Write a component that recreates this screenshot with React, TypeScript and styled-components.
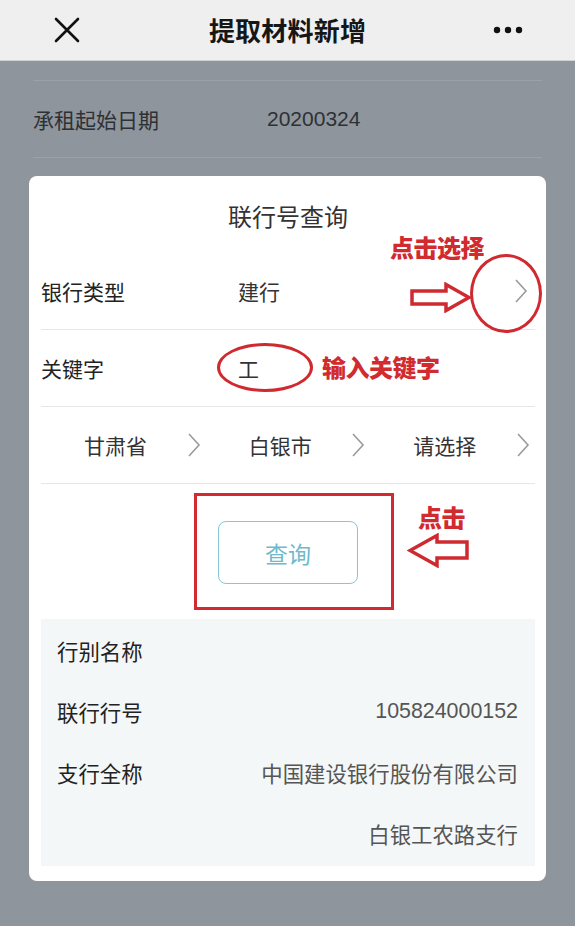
import styled, { createGlobalStyle } from 'styled-components';

const GlobalStyle = createGlobalStyle`
  html, body {
    margin: 0;
    padding: 0;
    background-color: #8f959c;
  }

  body {
    font-family: "Liberation Sans", "Noto Sans CJK SC", sans-serif;
  }

  * {
    box-sizing: border-box;
  }
`;

const Page = styled.div`
  width: 575px;
  height: 926px;
  overflow: hidden;
  background-color: #8f959c;
`;

const NavBar = styled.div`
  height: 61px;
  display: grid;
  grid-template-columns: 120px 1fr 120px;
  align-items: center;
  background-color: #efefef;
  border-bottom: 1px solid #d0d2d4;
`;

const NavButton = styled.div<{ $align: 'start' | 'end' }>`
  display: flex;
  justify-content: ${({ $align }) => ($align === 'start' ? 'flex-start' : 'flex-end')};
  padding: ${({ $align }) => ($align === 'start' ? '0 0 0 54px' : '0 52px 0 0')};
`;

const NavTitle = styled.div`
  text-align: center;
  font-size: 26px;
  font-weight: 700;
  color: #161616;
  letter-spacing: 0.2px;
  margin-top: -2px;
`;

const Backdrop = styled.div`
  padding: 19px 29px 0;
`;

const BehindRow = styled.div`
  margin: 0 4px;
  height: 78px;
  display: flex;
  align-items: center;
  border-top: 1px solid #9ca1a7;
  border-bottom: 1px solid #9ca1a7;
  font-size: 21px;
  color: #2d3135;
`;

const BehindLabel = styled.span`
  width: 234px;
`;

const Card = styled.div`
  position: relative;
  margin-top: 18px;
  height: 705px;
  background-color: #ffffff;
  border-radius: 8px;
  padding: 0 11px 0 12px;
  display: flex;
  flex-direction: column;
`;

const CardTitle = styled.div`
  height: 77px;
  display: flex;
  align-items: center;
  justify-content: center;
  font-size: 24px;
  color: #333;
  padding-top: 2px;
`;

const FormRow = styled.div`
  height: 77px;
  display: flex;
  align-items: center;
  border-bottom: 1px solid #e6e6e6;
  font-size: 21px;
  color: #222;
`;

const FormLabel = styled.span`
  width: 197px;
`;

const FormValue = styled.span`
  flex: 1;
  color: #333;
`;

const FormChevron = styled.span`
  display: flex;
  padding-right: 7px;
`;

const RegionCell = styled.div`
  flex: 1;
  display: flex;
  align-items: center;
  padding: 0 5px 0 43px;
  color: #333;
`;

const RegionName = styled.span`
  flex: 1;
`;

const ButtonArea = styled.div`
  height: 135px;
  display: flex;
  align-items: center;
  justify-content: center;
`;

const QueryButton = styled.button`
  width: 140px;
  height: 63px;
  border: 1.5px solid #86c7d3;
  border-radius: 8px;
  background: #fff;
  color: #70b9ca;
  font-size: 23px;
  font-family: "Noto Sans CJK SC", sans-serif;
  margin-top: 2px;
`;

const ResultPanel = styled.div`
  background-color: #f4f7f7;
  padding: 1px 17px 2px 16px;
  display: flex;
  flex-direction: column;
`;

const ResultRow = styled.div`
  height: 61px;
  display: flex;
  align-items: center;
  justify-content: space-between;
  font-size: 21.4px;
`;

const ResultLabel = styled.span`
  color: #222;
`;

const ResultValue = styled.span`
  color: #555;
  text-align: right;
`;

/* red hand-drawn hints lying over the dialog */
const Note = styled.span<{ $left: number; $top: number }>`
  position: absolute;
  left: ${({ $left }) => $left}px;
  top: ${({ $top }) => $top}px;
  font-size: 24px;
  line-height: 24px;
  font-weight: 900;
  color: #d12a2f;
  font-family: "Noto Sans CJK SC", sans-serif;
  letter-spacing: -0.5px;
`;

const Ring = styled.div<{ $left: number; $top: number; $w: number; $h: number }>`
  position: absolute;
  left: ${({ $left }) => $left}px;
  top: ${({ $top }) => $top}px;
  width: ${({ $w }) => $w}px;
  height: ${({ $h }) => $h}px;
  border: 3px solid #cf2a30;
  border-radius: 50%;
`;

const Frame = styled.div`
  position: absolute;
  left: 165px;
  top: 317px;
  width: 200px;
  height: 117px;
  border: 3px solid #d22a30;
`;

const ArrowMark = styled.svg<{ $left: number; $top: number }>`
  position: absolute;
  left: ${({ $left }) => $left}px;
  top: ${({ $top }) => $top}px;
`;

function Chevron() {
  return (
    <svg width="14" height="26" viewBox="0 0 14 26">
      <path d="M2 2 L12 13 L2 24" fill="none" stroke="#9a9a9a" strokeWidth="1.6" />
    </svg>
  );
}

function CloseIcon() {
  return (
    <svg width="26" height="26" viewBox="0 0 26 26">
      <path d="M2 2 L24 24 M24 2 L2 24" stroke="#111" strokeWidth="2.6" strokeLinecap="round" />
    </svg>
  );
}

function MoreIcon() {
  return (
    <svg width="30" height="8" viewBox="0 0 30 8">
      <circle cx="4" cy="4" r="3.2" fill="#111" />
      <circle cx="15" cy="4" r="3.2" fill="#111" />
      <circle cx="26" cy="4" r="3.2" fill="#111" />
    </svg>
  );
}

const regions = ['甘肃省', '白银市', '请选择'];

const results = [
  { label: '行别名称', value: '' },
  { label: '联行行号', value: '105824000152' },
  { label: '支行全称', value: '中国建设银行股份有限公司' },
  { label: '', value: '白银工农路支行' },
];

export default function App() {
  return (
    <Page>
      <GlobalStyle />
      <NavBar>
        <NavButton $align="start">
          <CloseIcon />
        </NavButton>
        <NavTitle>提取材料新增</NavTitle>
        <NavButton $align="end">
          <MoreIcon />
        </NavButton>
      </NavBar>

      <Backdrop>
        <BehindRow>
          <BehindLabel>承租起始日期</BehindLabel>
          <span>20200324</span>
        </BehindRow>

        <Card>
          <CardTitle>联行号查询</CardTitle>
          <FormRow>
            <FormLabel>银行类型</FormLabel>
            <FormValue>建行</FormValue>
            <FormChevron>
              <Chevron />
            </FormChevron>
          </FormRow>
          <FormRow>
            <FormLabel>关键字</FormLabel>
            <FormValue>工</FormValue>
          </FormRow>
          <FormRow>
            {regions.map((name) => (
              <RegionCell key={name}>
                <RegionName>{name}</RegionName>
                <Chevron />
              </RegionCell>
            ))}
          </FormRow>

          <ButtonArea>
            <QueryButton>查询</QueryButton>
          </ButtonArea>

          <ResultPanel>
            {results.map((r, i) => (
              <ResultRow key={i}>
                <ResultLabel>{r.label}</ResultLabel>
                <ResultValue>{r.value}</ResultValue>
              </ResultRow>
            ))}
          </ResultPanel>

          <Note $left={361} $top={59}>点击选择</Note>
          <Ring $left={441} $top={78} $w={72} $h={79} />
          <ArrowMark $left={381} $top={106} width="62" height="31" viewBox="0 0 62 31">
            <path d="M2 9 H36 V2.5 L59 15.5 L36 28.5 V22 H2 Z" fill="none" stroke="#cf2a30" strokeWidth="3.5" strokeLinejoin="miter" />
          </ArrowMark>

          <Ring $left={188} $top={167} $w={96} $h={49} />
          <Note $left={293} $top={179}>输入关键字</Note>

          <Frame />
          <Note $left={389} $top={329}>点击</Note>
          <ArrowMark $left={378} $top={357} width="62" height="35" viewBox="0 0 62 35">
            <path d="M60 9 H30 V2.5 L3 17.5 L30 32.5 V25 H60 Z" fill="none" stroke="#cf2a30" strokeWidth="3.5" strokeLinejoin="miter" />
          </ArrowMark>
        </Card>
      </Backdrop>
    </Page>
  );
}
